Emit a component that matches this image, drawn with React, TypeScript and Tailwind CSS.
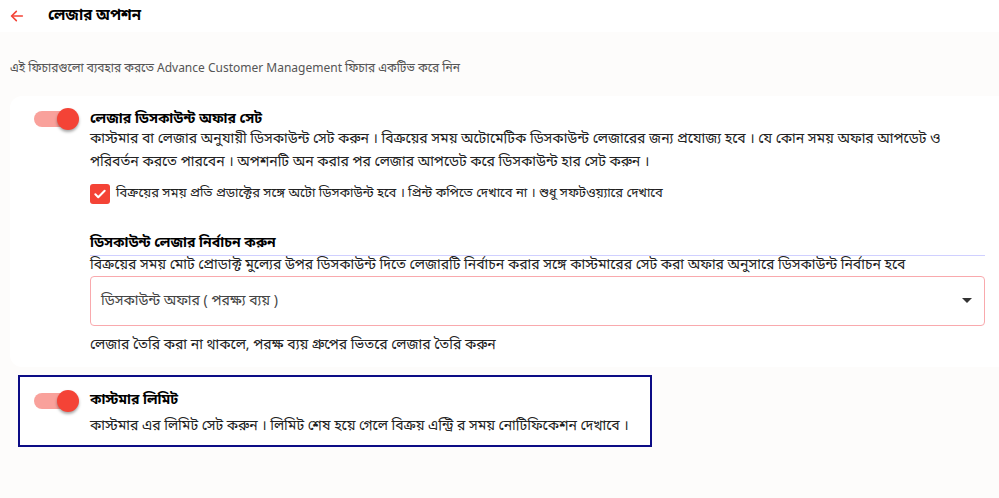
import React, { useState } from 'react';

const Toggle: React.FC<{ on: boolean; onChange: () => void }> = ({ on, onChange }) => (
  <button
    onClick={onChange}
    className="relative w-[46px] h-[22px] shrink-0 flex items-center"
  >
    <span className={`block w-[34px] h-[16px] rounded-full ${on ? 'bg-[#f9a19b]' : 'bg-gray-300'}`} />
    <span
      className={`absolute top-0 w-[22px] h-[22px] rounded-full shadow-[0_2px_3px_rgba(0,0,0,0.35)] ${
        on ? 'left-[23px] bg-[#f44336]' : 'left-0 bg-white'
      }`}
    />
  </button>
);

const App: React.FC = () => {
  const [discountOn, setDiscountOn] = useState(true);
  const [limitOn, setLimitOn] = useState(true);
  const [autoDiscount, setAutoDiscount] = useState(true);

  return (
    <div
      className="min-h-[498px] bg-[#fdfcfb] text-[#222]"
      style={{ fontFamily: '"Noto Sans Bengali", "Open Sans", "Noto Sans", sans-serif' }}
    >
      {/* হেডার */}
      <div className="bg-white h-[32px] flex items-center px-[6px]">
        <button className="text-[#f44336] w-[22px] h-[22px] flex items-center justify-center">
          <svg width="16" height="16" viewBox="0 0 24 24" fill="none" stroke="currentColor" strokeWidth="2.4" strokeLinecap="round">
            <path d="M20 12H5" />
            <path d="M11 5l-7 7 7 7" />
          </svg>
        </button>
        <h1 className="ml-[20px] text-[15px] font-bold text-black">লেজার অপশন</h1>
      </div>

      <p className="mt-[28px] px-[10px] text-[12px] text-[#555]">
        এই ফিচারগুলো ব্যবহার করতে Advance Customer Management ফিচার একটিভ করে নিন
      </p>

      {/* ডিসকাউন্ট কার্ড */}
      <div className="mt-[18px] ml-[10px] bg-white rounded-l-[12px] pt-[10px] pb-[10px] pl-[24px] pr-[14px] flex gap-[10px]">
        <div className="pt-[2px]">
          <Toggle on={discountOn} onChange={() => setDiscountOn(!discountOn)} />
        </div>
        <div className="flex-1 min-w-0">
          <h2 className="pt-[3px] text-[14px] font-bold text-black leading-[22px]">লেজার ডিসকাউন্ট অফার সেট</h2>
          <p className="mt-[-3px] text-[14px] leading-[23px] text-[#222]">
            কাস্টমার বা লেজার অনুযায়ী ডিসকাউন্ট সেট করুন । বিক্রয়ের সময় অটোমেটিক ডিসকাউন্ট লেজারের জন্য প্রযোজ্য হবে । যে কোন সময় অফার আপডেট ও পরিবর্তন করতে পারবেন । অপশনটি অন করার পর লেজার আপডেট করে ডিসকাউন্ট হার সেট করুন ।
          </p>
          <label className="mt-[10px] flex items-center gap-[6px] cursor-pointer">
            <span
              onClick={() => setAutoDiscount(!autoDiscount)}
              className={`w-[20px] h-[20px] rounded-[3px] flex items-center justify-center ${
                autoDiscount ? 'bg-[#f44336]' : 'border-2 border-gray-400 bg-white'
              }`}
            >
              {autoDiscount && (
                <svg width="14" height="14" viewBox="0 0 24 24" fill="none" stroke="white" strokeWidth="3.5" strokeLinecap="round" strokeLinejoin="round">
                  <path d="M4 12.5l5 5L20 6.5" />
                </svg>
              )}
            </span>
            <span className="text-[13px] text-[#222]">
              বিক্রয়ের সময় প্রতি প্রডাক্টের সঙ্গে অটো ডিসকাউন্ট হবে । প্রিন্ট কপিতে দেখাবে না । শুধু সফটওয়্যারে দেখাবে
            </span>
          </label>

          <h3 className="mt-[29px] text-[14px] font-bold text-black leading-[22px]">ডিসকাউন্ট লেজার নির্বাচন করুন</h3>
          <p className="border-t border-[#d0d0ff] text-[14px] leading-[20px] text-[#222]">
            বিক্রয়ের সময় মোট প্রোডাক্ট মুল্যের উপর ডিসকাউন্ট দিতে লেজারটি নির্বাচন করার সঙ্গে কাস্টমারের সেট করা অফার অনুসারে ডিসকাউন্ট নির্বাচন হবে
          </p>
          <div className="h-[50px] border border-[#f9a9ad] rounded-[4px] flex items-center justify-between pl-[10px] pr-[12px]">
            <span className="text-[14px] text-[#444]">ডিসকাউন্ট অফার ( পরক্ষ্য ব্যয় )</span>
            <svg width="10" height="6" viewBox="0 0 10 6">
              <path d="M0 0h10L5 5z" fill="#333" />
            </svg>
          </div>
          <p className="mt-[9px] text-[14px] leading-[22px] text-[#222]">
            লেজার তৈরি করা না থাকলে, পরক্ষ ব্যয় গ্রুপের ভিতরে লেজার তৈরি করুন
          </p>
        </div>
      </div>

      {/* কাস্টমার লিমিট */}
      <div className="mt-[8px] ml-[18px] w-[634px] bg-white border-2 border-[#0c0c85] pt-[13px] pb-[7px] pl-[14px] pr-[10px] flex gap-[10px]">
        <div>
          <Toggle on={limitOn} onChange={() => setLimitOn(!limitOn)} />
        </div>
        <div>
          <h2 className="text-[14px] font-bold text-black leading-[22px]">কাস্টমার লিমিট</h2>
          <p className="mt-[4px] text-[14px] leading-[22px] text-[#222]">
            কাস্টমার এর লিমিট সেট করুন । লিমিট শেষ হয়ে গেলে বিক্রয় এন্ট্রি র সময় নোটিফিকেশন দেখাবে ।
          </p>
        </div>
      </div>
    </div>
  );
};

export default App;
